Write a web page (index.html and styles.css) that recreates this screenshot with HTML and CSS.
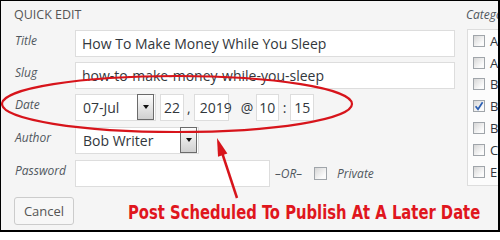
FILE: index.html
```html
<!DOCTYPE html>
<html>
<head>
<meta charset="utf-8">
<title>Quick Edit</title>
<link rel="stylesheet" href="styles.css">
</head>
<body>
<div class="frame">
  <div class="editor">
    <div class="heading">QUICK EDIT</div>
    <div class="row row-first">
      <span class="label">Title</span>
      <span class="field field-wide">How To Make Money While You Sleep</span>
    </div>
    <div class="row">
      <span class="label">Slug</span>
      <span class="field field-wide">how-to-make-money-while-you-sleep</span>
    </div>
    <div class="row">
      <span class="label">Date</span>
      <span class="select select-month"><span class="select-value">07-Jul</span><span class="select-button"></span></span>
      <span class="field field-day">22</span>
      <span class="sep sep-comma">,</span>
      <span class="field field-year">2019</span>
      <span class="sep sep-at">@</span>
      <span class="field field-hour">10</span>
      <span class="sep sep-colon">:</span>
      <span class="field field-min">15</span>
    </div>
    <div class="row row-spaced">
      <span class="label">Author</span>
      <span class="select select-author"><span class="select-value">Bob Writer</span><span class="select-button"></span></span>
    </div>
    <div class="row row-spaced">
      <span class="label">Password</span>
      <span class="field field-pass"></span>
      <span class="or">&ndash;OR&ndash;</span>
      <span class="checkbox"></span>
      <span class="private">Private</span>
    </div>
    <div class="actions">
      <span class="button">Cancel</span>
      <span class="note"><span class="note-text">Post Scheduled To Publish At A Later Date</span></span>
    </div>
  </div>
  <div class="cats">
    <div class="cats-title">Categories</div>
    <div class="cats-box">
      <div class="cat"><span class="checkbox"></span>Affiliate Marketing</div>
      <div class="cat"><span class="checkbox"></span>Advertising</div>
      <div class="cat"><span class="checkbox"></span>Blogging</div>
      <div class="cat"><span class="checkbox"><svg class="tick" viewBox="0 0 10 10" width="10" height="10"><path d="M1.6 5.2 L4 8.2 L8.6 1.2" fill="none" stroke="#2b5fb3" stroke-width="1.7"/></svg></span>Business</div>
      <div class="cat"><span class="checkbox"></span>Books</div>
      <div class="cat"><span class="checkbox"></span>Content</div>
      <div class="cat"><span class="checkbox"></span>Email Marketing</div>
    </div>
  </div>
  <svg class="markup" viewBox="0 0 500 232" width="500" height="232">
    <ellipse cx="177" cy="104" rx="175" ry="28" fill="none" stroke="#d7141b" stroke-width="2.2"/>
    <line x1="237" y1="198" x2="220.5" y2="148" stroke="#d7141b" stroke-width="2.5"/>
    <polygon points="217,138 227.4,153.5 218,156.7" fill="#d7141b"/>
  </svg>
</div>
</body>
</html>
```
FILE: styles.css
```css
html, body {
  margin: 0;
  padding: 0;
  background: #fff;
}

.frame {
  position: relative;
  box-sizing: border-box;
  width: 500px;
  height: 232px;
  border: 1px solid #000;
  border-right-width: 2px;
  border-bottom-width: 2px;
  background: #f5f5f5;
  overflow: hidden;
  display: flex;
  font-family: "Open Sans", sans-serif;
  color: #32373c;
}

.editor {
  flex: none;
  box-sizing: border-box;
  width: 454px;
  padding: 6px 0 0 13px;
  display: flex;
  flex-direction: column;
}

.heading {
  font-size: 12.5px;
  line-height: 16px;
  height: 16px;
  color: #555;
}

.row {
  display: flex;
  align-items: center;
  height: 27px;
  margin-top: 5px;
}

.row-first {
  margin-top: 7px;
}

.row-spaced {
  margin-top: 6px;
}

.label {
  flex: none;
  align-self: flex-start;
  width: 61px;
  padding: 3px 0 0 1px;
  box-sizing: border-box;
  font-size: 12px;
  line-height: 16px;
  font-style: italic;
  color: #50575e;
}

.field {
  flex: none;
  box-sizing: border-box;
  height: 27px;
  background: #fff;
  border: 1px solid #ddd;
  font-size: 14px;
  line-height: 25px;
  padding: 0 6px;
  color: #32373c;
  white-space: nowrap;
}

.field-wide {
  width: 380px;
}

.field-day {
  width: 24px;
  margin-left: 4px;
  padding: 0;
  text-align: center;
}

.field-year {
  width: 35px;
  padding: 0 0 0 5px;
}

.field-hour {
  width: 23px;
  padding: 0;
  text-align: center;
}

.field-min {
  width: 24px;
  padding: 0;
  text-align: center;
}

.field-pass {
  width: 195px;
}

.sep {
  font-size: 14px;
  color: #32373c;
}

.sep-comma {
  margin: 0 3px;
}

.sep-at {
  margin: 0 2.5px 0 12px;
}

.sep-colon {
  margin: 0 4px;
}

.select {
  flex: none;
  box-sizing: border-box;
  height: 27px;
  background: #fff;
  border: 1px solid #ddd;
  display: flex;
  align-items: stretch;
}

.select-month {
  width: 81px;
}

.select-author {
  width: 124px;
}

.select-value {
  flex: 1;
  font-size: 14px;
  line-height: 25px;
  padding-left: 7px;
  white-space: nowrap;
}

.select-button {
  flex: none;
  width: 17px;
  box-sizing: border-box;
  margin: -1px 1px 0 0;
  border: 1px solid #6b6b6b;
  background: linear-gradient(#fdfdfd, #d0d0d0);
  display: flex;
  align-items: center;
  justify-content: center;
}

.select-button::after {
  content: "";
  width: 0;
  height: 0;
  border-style: solid;
  border-width: 4px 3.5px 0;
  border-color: #111 transparent transparent;
}

.or {
  margin-left: 5px;
  font-size: 12px;
  font-style: italic;
  color: #50575e;
}

.checkbox {
  flex: none;
  box-sizing: border-box;
  width: 13px;
  height: 13px;
  border: 1px solid #a0a5aa;
  background: linear-gradient(135deg, #d6d6d6, #fbfbfb 75%);
  display: flex;
  align-items: center;
  justify-content: center;
}

.row .checkbox {
  margin-left: 12px;
}

.private {
  margin-left: 10px;
  font-size: 12px;
  font-style: italic;
  color: #50575e;
}

.actions {
  display: flex;
  align-items: center;
  height: 28px;
  margin-top: 10px;
}

.button {
  flex: none;
  box-sizing: border-box;
  width: 60px;
  height: 28px;
  border: 1px solid #ccc;
  border-radius: 3px;
  background: #f7f7f7;
  font-size: 13px;
  color: #555;
  display: flex;
  align-items: center;
  justify-content: center;
}

.note {
  flex: none;
  width: 350px;
  margin: 2px 0 0 54px;
  font-family: "DejaVu Sans Condensed", "DejaVu Sans", sans-serif;
  font-weight: bold;
  font-size: 19px;
  line-height: 24px;
  color: #e0161d;
  white-space: nowrap;
}

.note-text {
  display: inline-block;
  transform: scaleX(0.865);
  transform-origin: 0 50%;
}

.cats {
  flex: none;
  margin-left: 11px;
  padding-top: 6px;
  display: flex;
  flex-direction: column;
}

.cats-title {
  font-size: 12px;
  line-height: 16px;
  font-style: italic;
  color: #50575e;
  white-space: nowrap;
}

.cats-box {
  box-sizing: border-box;
  width: 60px;
  height: 157px;
  margin: 6px 0 0 1px;
  border: 1px solid #ddd;
  background: #fcfcfc;
  padding-left: 5px;
  overflow: hidden;
}

.cat {
  display: flex;
  align-items: center;
  height: 21.8px;
  font-size: 13px;
  color: #32373c;
  white-space: nowrap;
}

.cat .checkbox {
  width: 12px;
  height: 12px;
  margin-right: 5px;
}

.tick {
  display: block;
}

.markup {
  position: absolute;
  left: -1px;
  top: -1px;
  pointer-events: none;
}
```
